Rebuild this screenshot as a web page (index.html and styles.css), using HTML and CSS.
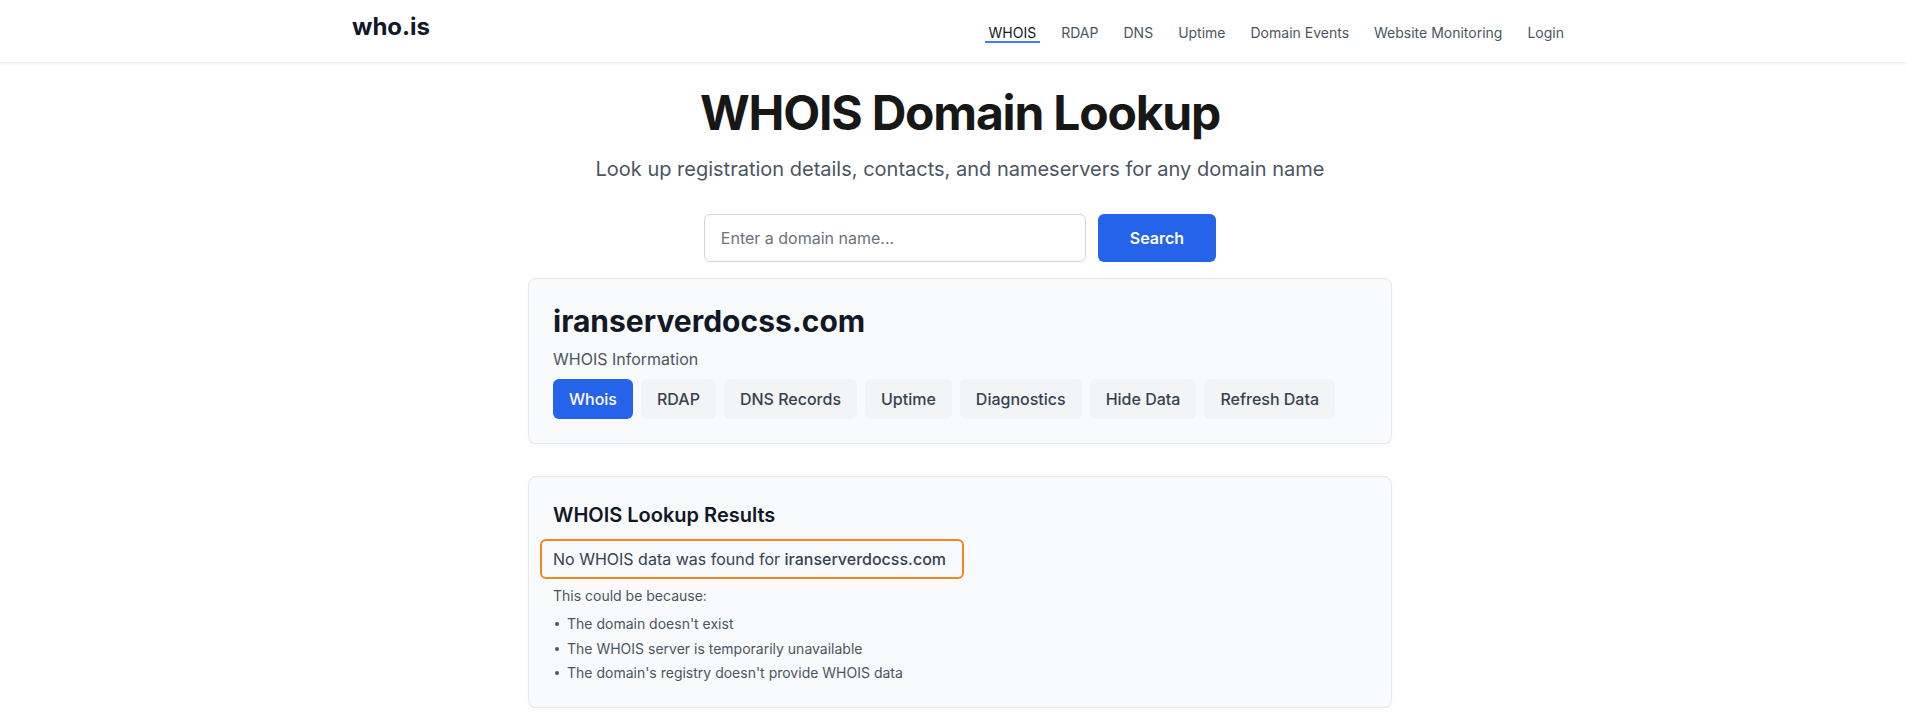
FILE: index.html
```html
<!DOCTYPE html>
<html lang="en">
<head>
  <meta charset="UTF-8">
  <title>WHOIS Domain Lookup - who.is</title>
  <link rel="stylesheet" href="styles.css">
</head>
<body>
  <header class="site-header">
    <div class="header-inner">
      <a class="logo" href="#">who.is</a>
      <nav class="main-nav">
        <a class="nav-link active" href="#">WHOIS</a>
        <a class="nav-link" href="#">RDAP</a>
        <a class="nav-link" href="#">DNS</a>
        <a class="nav-link" href="#">Uptime</a>
        <a class="nav-link" href="#">Domain Events</a>
        <a class="nav-link" href="#">Website Monitoring</a>
        <a class="nav-link" href="#">Login</a>
      </nav>
    </div>
  </header>

  <main class="page">
    <h1 class="page-title">WHOIS Domain Lookup</h1>
    <p class="page-subtitle">Look up registration details, contacts, and nameservers for any domain name</p>

    <form class="search-form" onsubmit="return false">
      <input class="search-input" type="text" placeholder="Enter a domain name...">
      <button class="search-button" type="submit">Search</button>
    </form>

    <section class="card domain-card">
      <h2 class="domain-name">iranserverdocss.com</h2>
      <p class="domain-sub">WHOIS Information</p>
      <div class="tabs">
        <button class="tab active">Whois</button>
        <button class="tab">RDAP</button>
        <button class="tab">DNS Records</button>
        <button class="tab">Uptime</button>
        <button class="tab">Diagnostics</button>
        <button class="tab">Hide Data</button>
        <button class="tab">Refresh Data</button>
      </div>
    </section>

    <section class="card results-card">
      <h3 class="results-title">WHOIS Lookup Results</h3>
      <p class="notice">No WHOIS data was found for <span class="notice-domain">iranserverdocss.com</span></p>
      <p class="reasons-intro">This could be because:</p>
      <ul class="reasons">
        <li>The domain doesn't exist</li>
        <li>The WHOIS server is temporarily unavailable</li>
        <li>The domain's registry doesn't provide WHOIS data</li>
      </ul>
    </section>
  </main>
</body>
</html>
```

FILE: styles.css
```css
* {
  box-sizing: border-box;
}
body {
  margin: 0;
  background: #ffffff;
  color: #111827;
  font-family: Inter, "Noto Sans", Arial, sans-serif;
}
a {
  text-decoration: none;
}

/* header */
.site-header {
  background: #fff;
  height: 62px;
  padding-left: 13px;
  box-shadow: 0 1px 3px rgba(0,0,0,0.1);
}
.header-inner {
  max-width: 1280px;
  margin: 0 auto;
  padding: 11px 32px 0;
  display: flex;
  justify-content: space-between;
  align-items: flex-start;
}
.logo {
  font-size: 24px;
  line-height: 32px;
  font-weight: 700;
  color: #111827;
}
.main-nav {
  display: flex;
  gap: 17px;
  margin-top: 14px;
}
.nav-link {
  font-size: 14px;
  line-height: 16px;
  color: #4b5563;
  padding: 0 4px;
  border-bottom: 2px solid transparent;
}
.nav-link.active {
  color: #111827;
  border-bottom-color: #3b82f6;
}

/* main */
.page {
  padding: 27px 0 0 13px;
  display: flex;
  flex-direction: column;
  align-items: center;
}
.page-title {
  margin: 0 0 18px;
  font-size: 48px;
  line-height: 48px;
  font-weight: 700;
  letter-spacing: -0.025em;
  color: #171717;
}
.page-subtitle {
  margin: 0 0 31px;
  font-size: 20px;
  line-height: 28px;
  color: #4b5563;
}
.search-form {
  display: flex;
  gap: 12px;
  margin-bottom: 16px;
}
.search-input {
  width: 382px;
  height: 48px;
  padding: 0 16px;
  border: 1px solid #d1d5db;
  border-radius: 6px;
  font-family: inherit;
  font-size: 16px;
  color: #111827;
}
.search-input::placeholder {
  color: #6b7280;
}
.search-button {
  height: 48px;
  padding: 0 32px;
  border: none;
  border-radius: 6px;
  background: #2563eb;
  color: #fff;
  font-family: inherit;
  font-size: 16px;
  font-weight: 600;
}

/* cards */
.card {
  width: 864px;
  background: #f9fafb;
  border: 1px solid #e5e7eb;
  border-radius: 8px;
  box-shadow: 0 1px 2px rgba(0,0,0,0.05);
  padding: 24px;
}
.domain-card {
  margin-bottom: 32px;
}
.domain-name {
  margin: 0 0 8px;
  font-size: 30px;
  line-height: 36px;
  font-weight: 700;
  color: #111827;
}
.domain-sub {
  margin: 0 0 8px;
  font-size: 16px;
  line-height: 24px;
  color: #4b5563;
}
.tabs {
  display: flex;
  gap: 8px;
}
.tab {
  padding: 8px 16px;
  border: none;
  border-radius: 6px;
  background: #f3f4f6;
  color: #374151;
  font-family: inherit;
  font-size: 16px;
  line-height: 24px;
  font-weight: 500;
}
.tab.active {
  background: #2563eb;
  color: #fff;
}

.results-title {
  margin: 0 0 10px;
  font-size: 20px;
  line-height: 28px;
  font-weight: 600;
  color: #111827;
}
.notice {
  display: inline-block;
  margin: 0 0 7px -13px;
  padding: 6px 16px 6px 11px;
  border: 2px solid #f6851f;
  border-radius: 6px;
  font-size: 16px;
  line-height: 24px;
  color: #374151;
}
.notice-domain {
  font-weight: 500;
}
.reasons-intro {
  margin: 0 0 8px;
  font-size: 14px;
  line-height: 20px;
  color: #4b5563;
}
.reasons {
  margin: 0;
  padding: 0;
  list-style: none;
  font-size: 14px;
  line-height: 20px;
  color: #4b5563;
}
.reasons li {
  display: flex;
  align-items: center;
}
.reasons li::before {
  content: "";
  width: 4px;
  height: 4px;
  border-radius: 50%;
  background: currentColor;
  margin: 0 8px 0 2px;
}
.reasons li + li {
  margin-top: 4.5px;
}
```
